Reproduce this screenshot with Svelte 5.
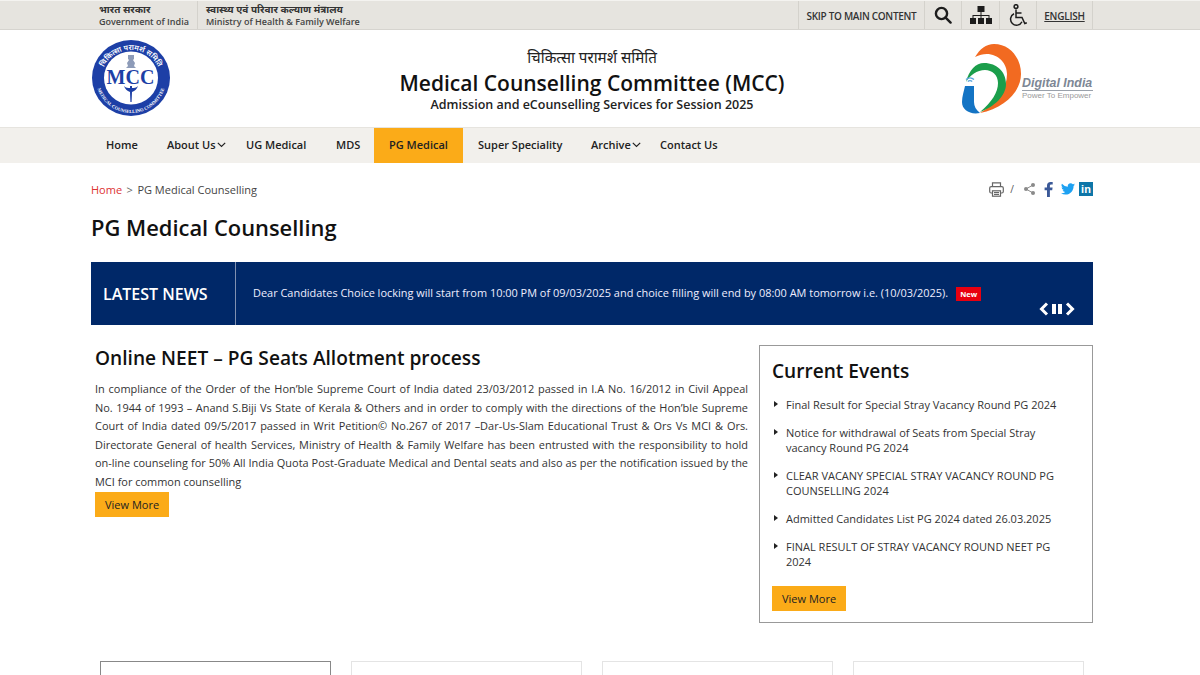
<script>
  const navItems = [
    { label: 'Home', w: 61 },
    { label: 'About Us', caret: true, w: 79 },
    { label: 'UG Medical', w: 90 },
    { label: 'MDS', w: 53 },
    { label: 'PG Medical', active: true, w: 89 },
    { label: 'Super Speciality', w: 113 },
    { label: 'Archive', caret: true, w: 69 },
    { label: 'Contact Us', w: 88 }
  ];
  const events = [
    'Final Result for Special Stray Vacancy Round PG 2024',
    'Notice for withdrawal of Seats from Special Stray vacancy Round PG 2024',
    'CLEAR VACANY SPECIAL STRAY VACANCY ROUND PG COUNSELLING 2024',
    'Admitted Candidates List PG 2024 dated 26.03.2025',
    'FINAL RESULT OF STRAY VACANCY ROUND NEET PG 2024'
  ];
</script>

<div class="page">
  <div class="topbar">
    <div class="wrap top-inner">
      <div class="gov">
        <div class="gov-cell first"><div class="hi">भारत सरकार</div><div class="en">Government of India</div></div>
        <div class="gov-cell"><div class="hi">स्वास्थ्य एवं परिवार कल्याण मंत्रालय</div><div class="en">Ministry of Health &amp; Family Welfare</div></div>
      </div>
      <div class="tools">
        <a class="tool skip" href="#main">SKIP TO MAIN CONTENT</a>
        <span class="tool icon-cell s">
          <svg width="18" height="18" viewBox="0 0 18 18" fill="none" stroke="#1d1d1d" stroke-width="2.4"><circle cx="7.5" cy="7.5" r="5.6"/><path d="M11.6 11.6l5 5" stroke-linecap="round"/></svg>
        </span>
        <span class="tool icon-cell m">
          <svg width="22" height="18" viewBox="0 0 22 18" fill="#1d1d1d"><rect x="7.500" y="0" width="7" height="6"/><rect x="0" y="12" width="6" height="6"/><rect x="8" y="12" width="6" height="6"/><rect x="16" y="12" width="6" height="6"/><path d="M10.500 6h1v3h8v3h-1v-2h-7v2h-1v-2h-7v2h-1V9h8z"/></svg>
        </span>
        <span class="tool icon-cell a">
          <svg width="20" height="23" viewBox="0 0 20 23" fill="none" stroke="#1d1d1d" stroke-width="1.5"><circle cx="8" cy="2.600" r="1.900"/><path d="M8 5.500v8h6l2.800 6 2-.8"/><path d="M8 9h5.500"/><path d="M6 9.800a6 6 0 1 0 8 8"/></svg>
        </span>
        <a class="tool eng" href="#en">ENGLISH</a>
      </div>
    </div>
  </div>

  <header class="wrap brand">
    <svg class="mcc" width="80" height="78" viewBox="0 0 80 78">
      <defs>
        <path id="arcTop" d="M10 41a30 30 0 0 1 60 0"/>
        <path id="arcBot" d="M5 39a35 35 0 0 0 70 0"/>
      </defs>
      <ellipse cx="40" cy="39" rx="39" ry="38" fill="#1d3fa6"/>
      <ellipse cx="40" cy="39" rx="27" ry="26.500" fill="#fff"/>
      <text class="arc-t"><textPath href="#arcTop" startOffset="50%" text-anchor="middle">चिकित्सा परामर्श समिति</textPath></text>
      <text class="arc-b"><textPath href="#arcBot" startOffset="50%" text-anchor="middle">MEDICAL COUNSELLING COMMITTEE</textPath></text>
      <path d="M37 16h6v4l-1 1 2 3-1 3 2 2H35l2-2-1-3 2-3-1-1z" fill="#8d9bb8"/>
      <text x="39.500" y="44.500" class="mcc-t" text-anchor="middle">MCC</text>
      <path d="M33 47c2 2 4 2 6 2v-2h2v2c2 0 4 0 6-2-1 3-3 5-6 6l-.4 10h-1.200l-.4-10c-3-1-5-3-6-6z" fill="#1d3fa6"/>
    </svg>
    <div class="title">
      <div class="t-hi">चिकित्सा परामर्श समिति</div>
      <h1>Medical Counselling Committee (MCC)</h1>
      <div class="t-sub">Admission and eCounselling Services for Session 2025</div>
    </div>
    <div class="di">
      <svg width="64" height="72" viewBox="0 0 64 72">
        <path d="M13 13C18 5 24 0 32 0C48 0 59 14 59 30C59 48 42 64 18 69C36 58 45 44 45 30C45 16 30 4 13 13z" fill="#f26a21"/>
        <path d="M4 38C7 26 14 19 22 19C35 19 44 28 44 40C44 52 32 63 18 68C30 58 36 48 36 39C36 31 30 26 23 26C15 26 8 31 4 38z" fill="#1b9e4b"/>
        <path d="M3 42L12 42L12 58C12 62 14 66 18 69C8 71 0 66 0 58C0 52 2 47 3 42z" fill="#1474c4"/>
        <path d="M4 35.500a6 6 0 0 1 8 0M5.800 37.500a3 3 0 0 1 4.400 0" fill="none" stroke="#5aa5dc" stroke-width="1.300"/>
      </svg>
      <div class="di-text">
        <div class="di-name">Digital India</div>
        <div class="di-tag">Power To Empower</div>
      </div>
    </div>
  </header>

  <nav class="nav">
    <div class="wrap nav-inner">
      {#each navItems as item}
        <a href="#n" class="nav-item" class:active={item.active} style="width:{item.w}px">
          {item.label}{#if item.caret}<svg class="caret" width="9" height="6" viewBox="0 0 9 6" fill="none" stroke="#222" stroke-width="1.200"><path d="M.8.8l3.700 3.700L8.200.8"/></svg>{/if}
        </a>
      {/each}
    </div>
  </nav>

  <main class="wrap" id="main">
    <div class="crumb-row">
      <div class="crumb"><a href="#h">Home</a><span class="sep">&gt;</span><span>PG Medical Counselling</span></div>
      <div class="share">
        <svg class="pr" width="15" height="15" viewBox="0 0 15 15" fill="none" stroke="#666" stroke-width="1.200"><path d="M3.500 4.500V.8h8v3.700"/><rect x=".7" y="4.600" width="13.600" height="6.400" rx="1.500"/><rect x="3.500" y="8.800" width="8" height="5.400" fill="#fff"/><path d="M5 10.500h5M5 12.400h5"/></svg>
        <span class="slash">/</span>
        <svg class="sh" width="11" height="12" viewBox="0 0 11 12" fill="#8a8a8a"><circle cx="9" cy="2" r="2"/><circle cx="2" cy="6" r="2"/><circle cx="9" cy="10" r="2"/><path d="M2 6l7-4M2 6l7 4" stroke="#8a8a8a"/></svg>
        <svg class="fb" width="9" height="15" viewBox="0 0 9 15" fill="#3b5998"><path d="M3 15V8.300H.6V5.600H3V3.700C3 1.300 4.400 0 6.600 0c1 0 1.900.1 2.100.1v2.400H7.300c-1.100 0-1.400.6-1.400 1.300v1.800h2.700l-.4 2.700H5.900V15z"/></svg>
        <svg class="tw" width="14" height="12" viewBox="0 0 24 20" fill="#1da1f2"><path d="M24 2.400a10 10 0 0 1-2.800.8A5 5 0 0 0 23.300.5a10 10 0 0 1-3.100 1.200 4.900 4.900 0 0 0-8.400 4.500A14 14 0 0 1 1.700.9a4.900 4.900 0 0 0 1.500 6.600 4.900 4.900 0 0 1-2.200-.6v.1a4.900 4.900 0 0 0 3.900 4.800 5 5 0 0 1-2.200.1 4.900 4.900 0 0 0 4.600 3.400A9.900 9.900 0 0 1 0 17.300 14 14 0 0 0 7.500 19.500c9.100 0 14-7.500 14-14v-.6A10 10 0 0 0 24 2.400z"/></svg>
        <span class="li">in</span>
      </div>
    </div>

    <h2 class="page-title">PG Medical Counselling</h2>

    <section class="news">
      <div class="news-label">LATEST NEWS</div>
      <div class="news-text">Dear Candidates Choice locking will start from 10:00 PM of 09/03/2025 and choice filling will end by 08:00 AM tomorrow i.e. (10/03/2025).<span class="new">New</span></div>
      <div class="news-ctl">
        <svg width="10" height="14" viewBox="0 0 10 14" fill="none" stroke="#fff" stroke-width="3"><path d="M8 1.500L2.500 7 8 12.500"/></svg>
        <svg width="10" height="10" viewBox="0 0 10 10" fill="#fff"><rect width="4" height="10"/><rect x="6" width="4" height="10"/></svg>
        <svg width="10" height="14" viewBox="0 0 10 14" fill="none" stroke="#fff" stroke-width="3"><path d="M2 1.500L7.500 7 2 12.500"/></svg>
      </div>
    </section>

    <div class="columns">
      <article class="about">
        <h3>Online NEET – PG Seats Allotment process</h3>
        <p>In compliance of the Order of the Hon’ble Supreme Court of India dated 23/03/2012 passed in I.A No. 16/2012 in Civil Appeal No. 1944 of 1993 – Anand S.Biji Vs State of Kerala &amp; Others and in order to comply with the directions of the Hon’ble Supreme Court of India dated 09/5/2017 passed in Writ Petition© No.267 of 2017 –Dar-Us-Slam Educational Trust &amp; Ors Vs MCI &amp; Ors. Directorate General of health Services, Ministry of Health &amp; Family Welfare has been entrusted with the responsibility to hold on-line counseling for 50% All India Quota Post-Graduate Medical and Dental seats and also as per the notification issued by the MCI for common counselling</p>
        <a class="btn" href="#v">View More</a>
      </article>
      <aside class="events">
        <h3>Current Events</h3>
        <ul>
          {#each events as e}<li>{e}</li>{/each}
        </ul>
        <a class="btn big" href="#v">View More</a>
      </aside>
    </div>
  </main>

  <div class="cards">
    <div class="card sel"></div>
    <div class="card"></div>
    <div class="card"></div>
    <div class="card"></div>
  </div>
</div>

<style>
  :global(body) { margin: 0; background: #fff; overflow: hidden; }
  .page { width: 1200px; height: 675px; overflow: hidden; font-family: "Open Sans", "Noto Sans", sans-serif; color: #222; position: relative; }
  a { text-decoration: none; color: inherit; }
  .wrap { width: 1002px; margin-left: 91px; }
  .topbar { background: #e6e4df; border-bottom: 1px solid #d6d4cf; border-top: 1px solid #f4f3f0; height: 28px; }
  .top-inner { display: flex; justify-content: space-between; height: 100%; }
  .gov { display: flex; padding-left: 8px; }
  .gov-cell { padding: 4px 10px 0 8px; border-left: 1px solid #d4d2cc; line-height: 11px; box-sizing: border-box; }
  .gov-cell.first { border-left: 0; padding-left: 0; padding-right: 8px; }
  .hi { font-size: 10px; font-weight: 700; color: #333; font-family: "Noto Sans Devanagari", "Noto Sans", "Open Sans", sans-serif; }
  .en { font-size: 9px; font-weight: 600; color: #444; }
  .tools { display: flex; height: 100%; }
  .tool { display: flex; align-items: center; justify-content: center; border-left: 1px solid #d4d2cc; height: 100%; box-sizing: border-box; }
  .skip { width: 126px; padding-top: 1px; font-size: 10px; letter-spacing: -0.3px; font-weight: 600; color: #333; }
  .icon-cell.s { width: 37px; }
  .icon-cell.m { width: 38px; }
  .icon-cell.a { width: 37px; }
  .eng { width: 57px; padding-top: 1px; font-size: 10px; letter-spacing: -0.25px; font-weight: 600; color: #333; text-decoration: underline; border-right: 1px solid #d4d2cc; }
  .brand { height: 97px; display: flex; align-items: flex-start; position: relative; }
  .mcc { margin-top: 9px; flex: none; }
  .arc-t { font-size: 7.500px; fill: #fff; font-weight: 600; }
  .arc-b { font-size: 4.600px; fill: #fff; font-weight: 700; font-family: "Liberation Serif", serif; }
  .mcc-t { font-family: "Liberation Serif", serif; font-weight: 700; font-size: 20px; fill: #1d3fa6; }
  .title { position: absolute; left: 0; right: 0; top: 16px; text-align: center; }
  .t-hi { font-size: 15.200px; line-height: 22px; color: #222; }
  h1 { margin: 2px 0 0; font-size: 21px; line-height: 26px; font-weight: 600; color: #111; }
  .t-sub { font-size: 12.500px; line-height: 17px; font-weight: 600; color: #222; margin-top: 0; }
  .di { margin-left: auto; margin-top: 14px; display: flex; position: relative; width: 131px; }
  .di-text { position: absolute; left: 60px; top: 33px; width: 71px; }
  .di-name { font-size: 12.400px; font-style: italic; font-weight: 700; color: #7d8795; line-height: 13px; border-bottom: 1px solid #9aa1ab; white-space: nowrap; font-family: "Liberation Sans", sans-serif; }
  .di-tag { font-size: 8px; color: #9a9a9a; line-height: 9px; white-space: nowrap; font-family: "Liberation Sans", sans-serif; }
  .nav { height: 35px; background: #f2f0ec; border-top: 1px solid #e6e4df; }
  .nav-inner { display: flex; height: 35px; }
  .nav-item { display: flex; align-items: center; box-sizing: border-box; padding: 0 0 2px 15px; font-size: 11px; font-weight: 600; color: #222; white-space: nowrap; flex: none; gap: 1px; }
  .nav-item.active { background: #fbab18; }
  .crumb-row { display: flex; justify-content: space-between; align-items: center; height: 20px; margin-top: 16px; }
  .crumb { font-size: 11px; color: #444; display: flex; gap: 4.500px; }
  .crumb a { color: #d33; }
  .sep { color: #666; }
  .share { display: flex; align-items: center; margin-top: 0; }
  .slash { font-size: 10px; color: #555; margin: 0 10px 0 6px; }
  .fb { margin-left: 9px; }
  .tw { margin-left: 8px; }
  .li { width: 14px; height: 14px; margin-left: 4px; background: #0e76a8; color: #fff; font-size: 11px; font-weight: 700; line-height: 14px; text-align: center; font-family: "Liberation Sans", sans-serif; }
  .page-title { margin: 14px 0 0; font-size: 21.900px; line-height: 30px; font-weight: 600; color: #111; }
  .news { margin-top: 19px; height: 63px; background: #002868; display: flex; position: relative; color: #fff; }
  .news-label { width: 145px; border-right: 1px solid #8090b0; font-size: 16px; font-weight: 600; line-height: 65px; padding-left: 12px; box-sizing: border-box; }
  .news-text { padding: 22px 0 0 17px; font-size: 10.950px; line-height: 18px; font-weight: 500; color: #eef; }
  .new { display: inline-block; background: #e8000f; color: #fff; font-size: 7.500px; font-weight: 700; padding: 0 4px; line-height: 14px; margin-left: 8px; vertical-align: 0; }
  .news-ctl { position: absolute; right: 18px; bottom: 9px; display: flex; align-items: center; gap: 3px; }
  .columns { display: flex; margin-top: 20px; align-items: flex-start; justify-content: space-between; }
  .about { width: 653px; margin-left: 4px; }
  .about h3 { margin: 0; font-size: 19.150px; line-height: 26px; font-weight: 600; color: #111; }
  .about p { margin: 9px 0 0; font-size: 10.960px; line-height: 18.600px; color: #333; text-align: justify; }
  .btn { display: inline-block; background: #fbab18; font-size: 11px; color: #222; padding: 0 10px; line-height: 25px; }
  .about .btn { display: block; width: fit-content; margin-top: 0; }
  .events { width: 334px; height: 278px; border: 1px solid #999; box-sizing: border-box; padding: 0 12px; }
  .events h3 { margin: 11px 0 0; font-size: 19.100px; line-height: 28px; font-weight: 600; color: #111; }
  .events ul { list-style: none; margin: 12px 0 0; padding: 0; }
  .events li { position: relative; padding: 0 12px 0 14px; font-size: 11px; line-height: 15px; color: #333; margin-bottom: 13px; }
  .events li::before { content: ""; position: absolute; left: 2px; top: 4px; border-left: 4px solid #222; border-top: 3px solid transparent; border-bottom: 3px solid transparent; }
  .btn.big { padding: 0 10px; margin-top: 4px; }
  .cards { position: absolute; left: 100px; top: 661px; display: flex; gap: 20px; }
  .card { width: 231px; height: 40px; box-sizing: border-box; border: 1px solid #e4e4e4; }
  .card.sel { border-color: #888; }
</style>
